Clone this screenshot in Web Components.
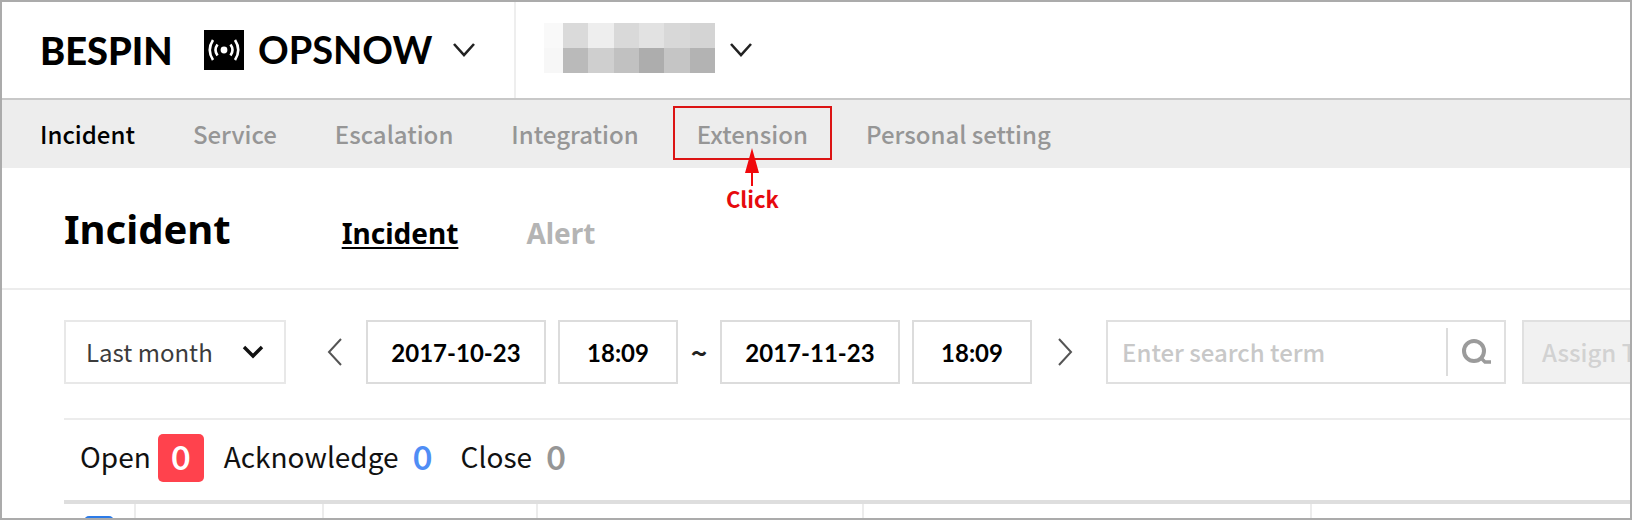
<!DOCTYPE html>
<html lang="en">
<head>
<meta charset="utf-8">
<title>OpsNow – Incident</title>
<style>
  html, body { margin: 0; height: 100%; }
  body { font-family: "Noto Sans CJK KR", "Noto Sans", sans-serif; color: #111; background: #fff; overflow: hidden; }
</style>
</head>
<body>
<ops-app>
  <ops-header slot="header"></ops-header>
  <ops-nav slot="nav">
    <ops-nav-item current>Incident</ops-nav-item>
    <ops-nav-item>Service</ops-nav-item>
    <ops-nav-item>Escalation</ops-nav-item>
    <ops-nav-item>Integration</ops-nav-item>
    <ops-nav-item hint="Click">Extension</ops-nav-item>
    <ops-nav-item>Personal setting</ops-nav-item>
  </ops-nav>
  <ops-title-bar heading="Incident">
    <ops-tab current>Incident</ops-tab>
    <ops-tab>Alert</ops-tab>
  </ops-title-bar>
  <ops-filter-bar></ops-filter-bar>
  <ops-stats>
    <ops-stat kind="open" count="0">Open</ops-stat>
    <ops-stat kind="ack" count="0">Acknowledge</ops-stat>
    <ops-stat kind="close" count="0">Close</ops-stat>
  </ops-stats>
  <ops-incident-table></ops-incident-table>
</ops-app>

<script>
const define = (name, render, css) => customElements.define(name, class extends HTMLElement {
  constructor() {
    super();
    this.attachShadow({ mode: "open" });
  }
  connectedCallback() {
    this.shadowRoot.innerHTML = `<style>*{box-sizing:border-box}${css}</style>${render(this)}`;
  }
});

define("ops-app", () => `
  <slot name="header"></slot>
  <slot name="nav"></slot>
  <main><slot></slot></main>`, `
  :host { display: block; box-sizing: border-box; height: 100vh; overflow: hidden; border: 2px solid #ababab; background: #fff; }`);

define("ops-chevron", el => {
  const paths = {
    down: ["0 0 24 16", "M2 2 L12 13 L22 2"],
    small: ["0 0 22 14", "M2 2 L11 11 L20 2"],
    left: ["0 0 16 28", "M15 1 L3 14 L15 27"],
    right: ["0 0 16 28", "M2 1 L14 14 L2 27"]
  };
  const [box, d] = paths[el.getAttribute("dir") || "down"];
  const [, , w, h] = box.split(" ");
  return `<svg width="${w}" height="${h}" viewBox="${box}" fill="none" stroke="currentColor" aria-hidden="true"><path d="${d}"/></svg>`;
}, `
  :host { display: inline-flex; }
  svg { display: block; stroke-width: var(--stroke, 2.6); }`);

define("ops-header", () => {
  const cells = ["#f9f9f9", "#dadada", "#eeeeee", "#d9d9d9", "#e2e2e2", "#d8d8d8", "#d4d4d4",
                 "#f7f7f7", "#bababa", "#cfcfcf", "#c1c1c1", "#adadad", "#c5c5c5", "#b3b3b3"];
  return `
  <div class="brand">
    <a class="bespin" href="#">BESPIN</a>
    <button type="button" aria-label="Switch product">
      <svg width="40" height="40" viewBox="0 0 40 40" fill="none" stroke="#fff" aria-hidden="true">
        <rect width="40" height="40" fill="#000" stroke="none"/>
        <circle cx="20" cy="20" r="3.4" fill="#fff" stroke="none"/>
        <path stroke-width="2.6" d="M13.500 14.500 Q9.500 20 13.500 25.500 M26.500 14.500 Q30.500 20 26.500 25.500"/>
        <path stroke-width="2.6" d="M9 10 Q2.500 20 9 30 M31 10 Q37.500 20 31 30"/>
      </svg>
      <span>OPSNOW</span>
      <ops-chevron></ops-chevron>
    </button>
  </div>
  <button class="account" type="button" aria-label="Account">
    <span class="mask">${cells.map(c => `<i style="background:${c}"></i>`).join("")}</span>
    <ops-chevron></ops-chevron>
  </button>`;
}, `
  :host { display: flex; box-sizing: border-box; height: 98px; border-bottom: 2px solid #c8c8c8; background: #fff; }
  .brand { display: flex; align-items: center; width: 514px; padding-left: 38px; border-right: 2px solid #eee; font: 700 38px/40px Lato, sans-serif; }
  .bespin { width: 164px; color: #000; font-weight: 900; text-decoration: none; }
  button { display: flex; align-items: center; padding: 0; border: 0; background: none; font: inherit; color: #000; }
  button span { margin-left: 14px; padding-bottom: 2px; }
  button ops-chevron { margin-left: 20px; color: #222; }
  .account { padding-left: 28px; }
  .account .mask { display: grid; grid-template-columns: 19px repeat(6, 1fr); grid-auto-rows: 25px; width: 171px; margin: 0; padding-bottom: 4px; }
  .account ops-chevron { margin-left: 14px; }`);

define("ops-nav", () => `<nav><slot></slot></nav>`, `
  :host { display: block; background: #ededed; }
  nav { display: flex; align-items: center; gap: 58px; height: 68px; padding-left: 38px; }`);

define("ops-nav-item", el => {
  const hint = el.getAttribute("hint");
  return `<a href="#"${el.hasAttribute("current") ? ' aria-current="page"' : ""}><slot></slot></a>` + (hint ? `
    <div class="box"></div>
    <div class="hint">
      <svg width="14" height="38" viewBox="0 0 14 38" aria-hidden="true"><path d="M7 0 L14 25 H8 V38 H6 V25 H0 Z" fill="#f0080c"/></svg>
      <span>${hint}</span>
    </div>` : "");
}, `
  :host { position: relative; display: block; font-size: 24px; line-height: 36px; font-weight: 500; color: #969696; white-space: nowrap; }
  :host([current]) { color: #000; }
  a { color: inherit; text-decoration: none; }
  .box { position: absolute; inset: -10px -24px -8px; border: 2px solid #dc1414; }
  .hint { position: absolute; top: 32px; left: 0; right: 0; display: flex; flex-direction: column; align-items: center; color: #e60a0e; font-size: 22px; line-height: 24px; font-weight: 700; }`);

define("ops-title-bar", el => `
  <h1>${el.getAttribute("heading")}</h1>
  <nav><slot></slot></nav>`, `
  :host { display: flex; align-items: baseline; box-sizing: border-box; padding: 34px 0 32px 62px; border-bottom: 2px solid #ececec; font-family: "Noto Sans", sans-serif; font-weight: 700; }
  h1 { margin: 0; font-size: 40px; line-height: 54px; color: #000; }
  nav { display: flex; gap: 68px; padding-left: 111px; }`);

define("ops-tab", () => `<a href="#"><slot></slot></a>`, `
  :host { display: block; font-size: 28px; line-height: 36px; color: #b4b4b4; }
  a { color: inherit; text-decoration: none; }
  :host([current]) { color: #000; }
  :host([current]) a { text-decoration: underline; text-decoration-thickness: 2px; text-underline-offset: 3px; }`);

define("ops-filter-bar", () => `
  <form>
    <label class="period">
      <select aria-label="Period"><option>Last month</option></select>
      <ops-chevron dir="small"></ops-chevron>
    </label>
    <button class="step prev" type="button" aria-label="Previous period"><ops-chevron dir="left"></ops-chevron></button>
    <input class="date" type="text" aria-label="Start date" value="2017-10-23">
    <input class="time" type="text" aria-label="Start time" value="18:09">
    <span class="to">~</span>
    <input class="date" type="text" aria-label="End date" value="2017-11-23">
    <input class="time" type="text" aria-label="End time" value="18:09">
    <button class="step next" type="button" aria-label="Next period"><ops-chevron dir="right"></ops-chevron></button>
    <div class="search">
      <input type="text" aria-label="Search" placeholder="Enter search term">
      <button type="button" aria-label="Search">
        <svg width="30" height="28" viewBox="0 0 30 28" fill="none" stroke="#9b9b9b" aria-hidden="true">
          <circle cx="12" cy="13" r="10" stroke-width="4"/>
          <path d="M18.500 19.500 L23 24 H29" stroke-width="3.4"/>
        </svg>
      </button>
    </div>
    <button class="assign" type="button" disabled>Assign To</button>
  </form>`, `
  :host { display: block; padding: 30px 0 34px 62px; overflow: hidden; }
  form { display: flex; align-items: center; height: 64px; }
  form > * { flex: none; height: 64px; }
  input, button, select { margin: 0; font: inherit; border-radius: 0; outline: 0; }
  .period { display: grid; grid-template-columns: 1fr 42px; align-items: center; width: 222px; border: 2px solid #e8e8e8; }
  .period select { grid-area: 1 / 1 / 2 / 3; appearance: none; height: 60px; padding: 0 0 2px 20px; border: 0; background: none; font-size: 24px; color: #3c3c3c; }
  .period ops-chevron { grid-area: 1 / 2; pointer-events: none; --stroke: 3.4; color: #111; }
  .step { display: flex; align-items: center; padding: 0; border: 0; background: none; color: #555; --stroke: 2; }
  .prev { width: 80px; padding-left: 40px; }
  .next { width: 74px; padding-left: 25px; }
  .date, .time { padding: 0; border: 2px solid #dcdcdc; background: #fff; text-align: center; font: 700 24px/28px Lato, sans-serif; color: #000; }
  .date { width: 180px; }
  .time { width: 120px; margin-left: 12px; }
  .to { width: 42px; text-align: center; font-size: 28px; line-height: 64px; font-weight: 700; color: #222; }
  .search { display: flex; align-items: center; width: 400px; border: 2px solid #e0e0e0; }
  .search input { flex: 1; min-width: 0; height: 60px; padding: 0 0 2px 14px; border: 0; background: none; font-size: 24px; font-weight: 500; }
  .search input::placeholder { color: #c8c8c8; opacity: 1; }
  .search button { display: flex; align-items: center; width: 58px; height: 48px; padding: 0 0 0 14px; border: 0; border-left: 2px solid #dcdcdc; background: none; }
  .assign { width: 160px; margin-left: 16px; padding: 0 0 2px 18px; border: 2px solid #e0e0e0; background: #f1f1f1; color: #d2d2d2; font-size: 24px; font-weight: 500; text-align: left; }`);

define("ops-stats", () => `<slot></slot>`, `
  :host { display: flex; align-items: center; box-sizing: border-box; height: 82px; margin-left: 62px; padding: 0 0 4px 16px; border-top: 2px solid #ececec; }`);

define("ops-stat", el => `<a href="#"><span><slot></slot></span><b>${el.getAttribute("count")}</b></a>`, `
  :host { display: block; margin-right: 20px; font-size: 28px; line-height: 44px; color: #111; }
  a { display: flex; align-items: center; color: inherit; text-decoration: none; }
  span { padding-bottom: 4px; }
  b { min-width: 48px; text-align: center; font: 700 32px/48px Lato, sans-serif; }
  :host([kind="open"]) b { width: 46px; min-width: 0; height: 48px; margin-left: 7px; border-radius: 5px; background: #ff424d; color: #fff; }
  :host([kind="ack"]) { margin-right: 14px; }
  :host([kind="ack"]) b { color: #4f8df5; }
  :host([kind="close"]) b { color: #969696; }`);

define("ops-incident-table", () => `
  <table>
    <colgroup><col style="width:72px"><col style="width:188px"><col style="width:214px"><col style="width:326px"><col style="width:448px"><col></colgroup>
    <thead><tr>
      <th scope="col"><input type="checkbox" aria-label="Select all" checked></th>
      <th scope="col"></th><th scope="col"></th><th scope="col"></th><th scope="col"></th><th scope="col"></th>
    </tr></thead>
  </table>`, `
  :host { display: block; margin-left: 62px; border-top: 4px solid #dedede; }
  table { width: 100%; table-layout: fixed; border-collapse: separate; border-spacing: 0; }
  th { height: 54px; padding: 0; border-right: 2px solid #ececec; }
  th:last-child { border-right: 0; }
  input { display: block; appearance: none; width: 30px; height: 30px; margin: 0 auto; border-radius: 5px; background: #2c7be8; }`);
</script>
</body>
</html>
